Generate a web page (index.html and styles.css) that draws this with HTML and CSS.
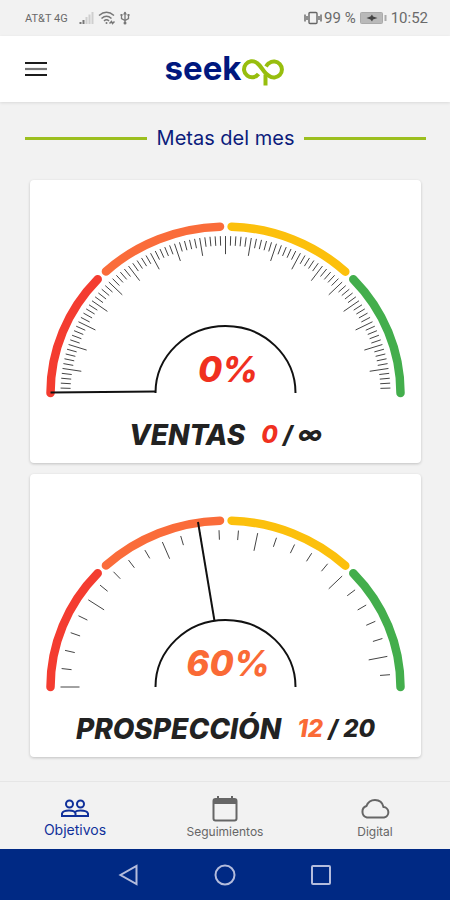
FILE: index.html
```html
<!DOCTYPE html>
<html lang="es">
<head>
<meta charset="utf-8">
<meta name="viewport" content="width=device-width, initial-scale=1">
<title>Seekop - Objetivos</title>
<link rel="stylesheet" href="styles.css">
</head>
<body>
<div class="statusbar">
  <div class="status-group">
    <span class="carrier">AT&amp;T 4G</span>
    <svg class="status-signal" width="15" height="14" viewBox="0 0 15 14" aria-hidden="true">
      <path d="M1.5 11v2M4.500 9v4" stroke="#777" stroke-width="2"/>
      <path d="M7.500 6v7M10.500 3.500v9.500M13.500 1v12" stroke="#cfcfcf" stroke-width="2"/>
    </svg>
    <svg width="18" height="14" viewBox="0 0 18 14" fill="none" stroke="#777" stroke-width="1.500" aria-hidden="true">
      <path d="M1 4.500Q8.500-2 16 4.500M3.500 7.500Q8.500 3 13.500 7.500M6 10Q8.500 7.500 11 10"/>
      <circle cx="8.500" cy="12" r="1" fill="#777" stroke="none"/>
      <path d="M11.500 12.500l2-2 1 2 2-2"/>
    </svg>
    <svg class="status-usb" width="10" height="14" viewBox="0 0 10 14" fill="none" stroke="#777" stroke-width="1.300" aria-hidden="true">
      <path d="M5 1v11M1.500 5v2.500L5 9.500l3.500-2V5"/>
      <path d="M3 3.500L5 .5l2 3z" fill="#777" stroke="none"/>
      <circle cx="5" cy="12" r="1.500" fill="#777" stroke="none"/>
      <path d="M.5 4h2M7.500 4h2" stroke-width="2"/>
    </svg>
  </div>
  <div class="status-group">
    <svg width="18" height="14" viewBox="0 0 18 14" fill="none" stroke="#666" stroke-width="1.400" aria-hidden="true">
      <rect x="5" y="1.500" width="8" height="11" rx="1"/>
      <path d="M1 3.500v7M3 5v4M15 5v4M17 3.500v7"/>
    </svg>
    <span class="battery-text">99 %</span>
    <svg class="status-battery" width="27" height="12" viewBox="0 0 27 12" aria-hidden="true">
      <rect x=".5" y=".5" width="22" height="11" rx="1" fill="#b9b9b9" stroke="#aaa"/>
      <path d="M6.500 6l4-1.500 1.500-2 1 2L17.500 6l-4.500 1.500-1 2-1.500-2z" fill="#444"/>
      <rect x="24.500" y="3" width="2" height="6" fill="#aaa"/>
    </svg>
    <time class="clock">10:52</time>
  </div>
</div>

<header class="appbar">
  <button class="menu" type="button" aria-label="Menú">
    <svg width="24" height="16" viewBox="0 0 24 16" aria-hidden="true">
      <path d="M1 2h22M1 14h22" stroke="#1c1c1c" stroke-width="2.200"/>
      <path d="M1 8h22" stroke="#777" stroke-width="2.200"/>
    </svg>
  </button>
  <div class="logo" role="img" aria-label="seekop">
    <span class="logo-text">seek</span>
    <svg class="logo-mark" width="44" height="30" viewBox="0 0 44 30" fill="none" stroke="#97be0d" stroke-width="4" aria-hidden="true">
      <path d="M17.500 18A8 8 0 1 1 16 7C20.500 10 22.500 17 28 19.800A8 8 0 1 0 28 7.200Q26.500 8.200 25 10.500"/>
      <path d="M24.500 18.500V29.500"/>
    </svg>
  </div>
</header>

<main class="content">
  <h1 class="section-title">Metas del mes</h1>

  <section class="card">
    <svg class="gauge" viewBox="0 0 361 180" data-step="1.8" data-first="1" data-last="99" role="img" aria-label="Ventas 0%">
      <g class="ticks"></g>
      <g class="arcs"></g>
      <path class="hub" d="M110.500 173A70 67 0 0 1 250.500 173"/>
      <path class="hub" d="M5.500 172.500L110.500 171.500"/>
      <text class="percent is-red" x="183" y="162">0%</text>
    </svg>
    <p class="caption"><span class="name">VENTAS</span><span class="figures"><span class="is-red">0</span> / ∞</span></p>
  </section>

  <section class="card">
    <svg class="gauge" viewBox="0 0 361 180" data-step="6.75" data-first="0" data-last="26" role="img" aria-label="Prospección 60%">
      <g class="ticks"></g>
      <g class="arcs"></g>
      <path class="hub" d="M110.500 173A70 67 0 0 1 250.500 173"/>
      <path class="hub" d="M153 8L169.500 107"/>
      <text class="percent is-orange" x="183" y="162">60%</text>
    </svg>
    <p class="caption"><span class="name">PROSPECCIÓN</span><span class="figures"><span class="is-orange">12</span> / 20</span></p>
  </section>
</main>

<nav class="tabs">
  <a class="tab active" href="#objetivos">
    <svg width="30" height="20" viewBox="0 0 30 20" fill="none" stroke="currentColor" stroke-width="2" aria-hidden="true">
      <circle cx="9.500" cy="5" r="3.500"/><circle cx="20.500" cy="5" r="3.500"/>
      <path d="M2 17v-2.500Q3 11.500 9 11.500T15.500 14.500V17zM15.500 17H28v-2.500Q27 11.500 20.500 11.500Q16.500 11.500 15 13"/>
    </svg>
    <span>Objetivos</span>
  </a>
  <a class="tab" href="#seguimientos">
    <svg width="28" height="27" viewBox="0 0 28 27" fill="none" stroke="currentColor" stroke-width="2" aria-hidden="true">
      <rect x="2.500" y="4" width="23" height="21.500" rx="2"/>
      <path d="M2.500 6.500h23" stroke-width="5"/>
      <path d="M7 1v4M21 1v4"/>
    </svg>
    <span>Seguimientos</span>
  </a>
  <a class="tab" href="#digital">
    <svg width="32" height="24" viewBox="0 0 32 24" fill="none" stroke="currentColor" stroke-width="2" aria-hidden="true">
      <path d="M8 19.500A6 6 0 0 1 7.500 8C9 4 12 2 16 2C20.500 2 23.500 4.500 24.500 9A5.300 5.300 0 0 1 25 19.500Z"/>
    </svg>
    <span>Digital</span>
  </a>
</nav>

<div class="sysnav">
  <button type="button" aria-label="Atrás">
    <svg width="22" height="22" viewBox="0 0 22 22" aria-hidden="true"><path d="M18.500 2v18L2.500 11z"/></svg>
  </button>
  <button type="button" aria-label="Inicio">
    <svg width="22" height="22" viewBox="0 0 22 22" aria-hidden="true"><circle cx="11" cy="11" r="9.500"/></svg>
  </button>
  <button type="button" aria-label="Recientes">
    <svg width="22" height="22" viewBox="0 0 22 22" aria-hidden="true"><rect x="2" y="2" width="18" height="18" rx="1"/></svg>
  </button>
</div>
<script src="gauge.js"></script>
</body>
</html>
```
FILE: gauge.js
```js
const NS = 'http://www.w3.org/2000/svg';
const CX = 180.5, CY = 173, RATIO = 0.951;

// Point at an angle in degrees, 0 = far left, 90 = top, 180 = far right.
function point(radius, degrees) {
  const a = degrees * Math.PI / 180;
  return (CX - radius * Math.cos(a)).toFixed(2) + ' ' +
    (CY - radius * RATIO * Math.sin(a)).toFixed(2);
}

function addPath(parent, d, className) {
  const path = document.createElementNS(NS, 'path');
  path.setAttribute('d', d);
  path.setAttribute('class', className);
  parent.appendChild(path);
}

const segments = [
  [0, 43.1, 'arc-red'],
  [46.9, 88.2, 'arc-orange'],
  [92, 133.2, 'arc-yellow'],
  [136.9, 180, 'arc-green']
];

document.querySelectorAll('.gauge').forEach(gauge => {
  const arcs = gauge.querySelector('.arcs');
  segments.forEach(([from, to, name]) => {
    addPath(arcs, `M${point(175, from)}A175 ${175 * RATIO} 0 0 1 ${point(175, to)}`, name);
  });

  const ticks = gauge.querySelector('.ticks');
  const step = Number(gauge.dataset.step);
  for (let i = Number(gauge.dataset.first); i <= Number(gauge.dataset.last); i++) {
    const inner = i % 5 === 0 ? 146 : 155;
    addPath(ticks, `M${point(165, i * step)}L${point(inner, i * step)}`, 'tick');
  }
});
```
FILE: styles.css
```css
* { box-sizing: border-box; }

body {
  margin: 0;
  min-height: 100vh;
  display: flex;
  flex-direction: column;
  background: #f2f2f2;
  color: #222;
  font-family: Inter, "Liberation Sans", sans-serif;
}

button {
  padding: 0;
  border: 0;
  background: none;
}

svg { display: block; }

.statusbar {
  height: 36px;
  padding: 0 22px 0 25px;
  display: flex;
  align-items: center;
  justify-content: space-between;
  color: #6a6a6a;
  font-family: Roboto, "Liberation Sans", sans-serif;
}
.status-group { display: flex; align-items: center; }
.carrier { font-size: 11px; }
.status-signal { margin: 0 4px 0 11px; }
.status-usb { margin-left: 4px; }
.battery-text, .clock { font-size: 15px; }
.battery-text { margin: 0 4px 0 2px; }
.status-battery { margin-right: 4px; }

.appbar {
  height: 66px;
  padding: 0 24px;
  display: grid;
  grid-template-columns: 1fr auto 1fr;
  align-items: center;
  background: #fff;
  box-shadow: 0 1px 3px rgba(0, 0, 0, 0.1);
}
.menu { width: 24px; }
.logo { display: flex; align-items: center; }
.logo-text {
  color: #00187e;
  font-size: 33px;
  font-weight: 700;
  line-height: 36px;
  padding-bottom: 2px;
}
.logo-mark { margin-top: 4px; }

.content {
  flex: 1;
  padding: 24px 29px 0 30px;
  display: flex;
  flex-direction: column;
  gap: 11px;
}

.section-title {
  margin: 0 -5px 18px;
  display: flex;
  align-items: center;
  gap: 10px;
  color: #0c1c7c;
  font-size: 20px;
  font-weight: 400;
  line-height: 25px;
}
.section-title::before,
.section-title::after {
  content: "";
  flex: 1;
  height: 3px;
  background: #9cbf1f;
}

.card {
  padding: 40px 15px 10px;
  border-radius: 4px;
  background: #fff;
  box-shadow: 0 1px 3px rgba(0, 0, 0, 0.2);
}
.gauge { width: 100%; height: auto; overflow: visible; }
.arcs path { fill: none; stroke-width: 8.5; stroke-linecap: round; }
.arcs .arc-red { stroke: #f43c30; }
.arcs .arc-orange { stroke: #fa6c3a; }
.arcs .arc-yellow { stroke: #fcc00c; }
.arcs .arc-green { stroke: #43ae4c; }
.tick { stroke: #444; stroke-width: 1; }
.hub { fill: none; stroke: #111; stroke-width: 2; }
.percent {
  font-size: 35px;
  font-style: italic;
  font-weight: 800;
  text-anchor: middle;
}
.is-red { color: #f0301f; fill: #f0301f; }
.is-orange { color: #fa6a36; fill: #fa6a36; }

.caption {
  margin: 17px 0 0;
  display: flex;
  align-items: center;
  justify-content: center;
  gap: 16px;
  font-style: italic;
  font-weight: 800;
  line-height: 36px;
}
.name { font-size: 28px; }
.figures { font-size: 24px; }

.tabs {
  height: 68px;
  display: grid;
  grid-template-columns: repeat(3, 1fr);
  border-top: 1px solid #e6e6e6;
}
.tab {
  padding-bottom: 9px;
  display: flex;
  flex-direction: column;
  align-items: center;
  justify-content: flex-end;
  gap: 2px;
  color: #666;
  font-size: 12px;
  line-height: 16px;
  text-decoration: none;
}
.tab.active {
  padding-bottom: 11px;
  gap: 3px;
  color: #10309a;
  font-size: 14px;
}

.sysnav {
  height: 51px;
  display: flex;
  align-items: center;
  justify-content: center;
  gap: 74px;
  background: #002984;
}
.sysnav path, .sysnav circle, .sysnav rect {
  fill: none;
  stroke: #b4bcdc;
  stroke-width: 2;
}
```
